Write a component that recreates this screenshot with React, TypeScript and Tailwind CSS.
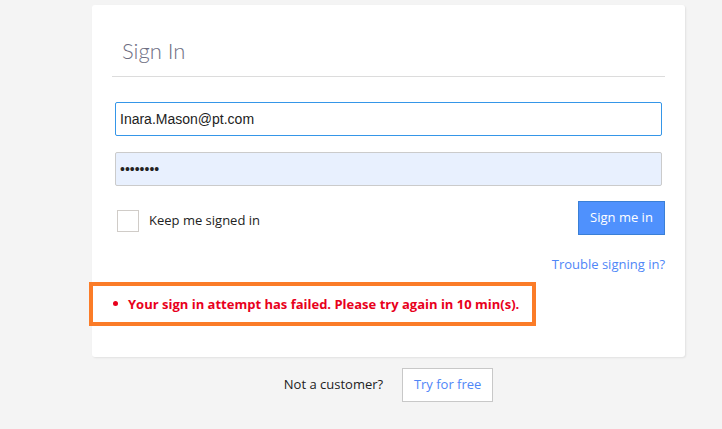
import React, { useState } from 'react';

export default function App() {
  const [email, setEmail] = useState('Inara.Mason@pt.com');
  const [password, setPassword] = useState('password');
  const [keepSignedIn, setKeepSignedIn] = useState(false);

  return (
    <div className="min-h-screen w-full bg-[#f4f4f4] pt-[5px] font-['Open_Sans',sans-serif]">
      {/* Sign in card */}
      <div className="ml-[92px] w-[593px] rounded-[3px] bg-white px-[20px] pb-[31px] pt-[32px] shadow-[1px_1px_2px_rgba(0,0,0,0.08)]">
        <h1 className="pl-[10px] font-['Lato',sans-serif] text-[22px] font-light leading-[28px] text-[#6e6e82]">
          Sign In
        </h1>
        <div className="mt-[11px] h-[1px] bg-[#dcdcdc]" />

        <div className="mt-[25px] flex flex-col gap-[16px] px-[3px]">
          <input
            value={email}
            onChange={(e) => setEmail(e.target.value)}
            className="h-[34px] w-full rounded-[2px] border border-[#3596e8] bg-white px-[4px] font-['Liberation_Sans',sans-serif] text-[14px] text-[#222] outline-none"
          />
          <input
            type="password"
            value={password}
            onChange={(e) => setPassword(e.target.value)}
            className="h-[34px] w-full rounded-[2px] border border-[#cbcbcb] bg-[#e8f0fe] px-[4px] font-['Liberation_Sans',sans-serif] text-[14px] text-[#222] outline-none"
          />
        </div>

        <div className="mt-[15px] flex items-center justify-between">
          <label className="ml-[5px] flex cursor-pointer items-center gap-[10px] pt-[6px] text-[13px] text-[#222]">
            <span
              onClick={() => setKeepSignedIn(!keepSignedIn)}
              className="h-[22px] w-[22px] border border-[#d0ccc8] bg-white"
            />
            Keep me signed in
          </label>
          <button className="h-[34px] w-[87px] border border-[#3a7fd6] bg-[#4f91fd] text-[13px] text-white">
            Sign me in
          </button>
        </div>

        <div className="mt-[20px] flex justify-end">
          <a href="#" className="text-[13px] text-[#4f86f7]">
            Trouble signing in?
          </a>
        </div>

        {/* Error message */}
        <div className="-ml-[23px] mt-[7px] w-[447px] border-[4px] border-[#fb7c28] py-[9px] pl-[20px]">
          <ul className="list-none">
            <li className="flex items-center gap-[10px] text-[13px] font-bold leading-[18px] text-[#e8001c]">
              <span className="h-[5px] w-[5px] rounded-full bg-[#e8001c]" />
              Your sign in attempt has failed. Please try again in 10 min(s).
            </li>
          </ul>
        </div>
      </div>

      {/* Sign up prompt */}
      <div className="ml-[92px] mt-[11px] flex w-[593px] items-center justify-center gap-[19px] text-[13px] text-[#222]">
        <span>Not a customer?</span>
        <button className="h-[34px] w-[91px] border border-[#c8c8c8] bg-white text-[13px] text-[#4f86f7]">
          Try for free
        </button>
      </div>
    </div>
  );
}
